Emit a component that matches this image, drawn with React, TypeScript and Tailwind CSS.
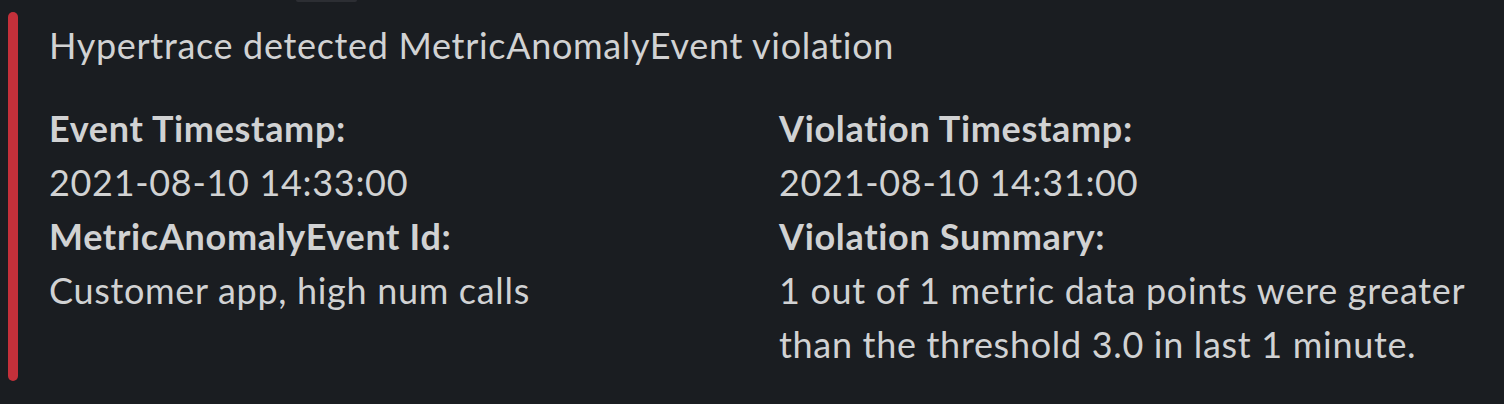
import React from "react";

type Field = { label: string; value: string };

const left: Field[] = [
  { label: "Event Timestamp:", value: "2021-08-10 14:33:00" },
  { label: "MetricAnomalyEvent Id:", value: "Customer app, high num calls" },
];

const right: Field[] = [
  { label: "Violation Timestamp:", value: "2021-08-10 14:31:00" },
  {
    label: "Violation Summary:",
    value: "1 out of 1 metric data points were greater than the threshold 3.0 in last 1 minute.",
  },
];

const FieldList: React.FC<{ fields: Field[] }> = ({ fields }) => (
  <div>
    {fields.map((f) => (
      <div key={f.label}>
        <div className="font-bold">{f.label}</div>
        <div>{f.value}</div>
      </div>
    ))}
  </div>
);

const App: React.FC = () => {
  return (
    <div
      className="w-[1504px] h-[404px] overflow-hidden bg-[#1a1d21] text-[#d1d2d3] text-[36px] leading-[54px] tracking-[0.68px]"
      style={{ fontFamily: "Lato, 'Noto Sans', sans-serif" }}
    >
      {/* cut off line from the message above */}
      <div className="h-[2px] flex">
        <div className="ml-[296px] w-[61px] h-[2px] rounded-b bg-[#2c2e33]" />
      </div>

      <div className="flex mt-[10px] ml-[8px]">
        <div className="w-[10px] shrink-0 rounded-full bg-[#c4303a]" />
        <div className="pl-[31px] pt-[6px] pb-[10px]">
          <div>Hypertrace detected MetricAnomalyEvent violation</div>
          <div className="grid grid-cols-[730px_710px] mt-[29px]">
            <FieldList fields={left} />
            <FieldList fields={right} />
          </div>
        </div>
      </div>
    </div>
  );
};

export default App;
